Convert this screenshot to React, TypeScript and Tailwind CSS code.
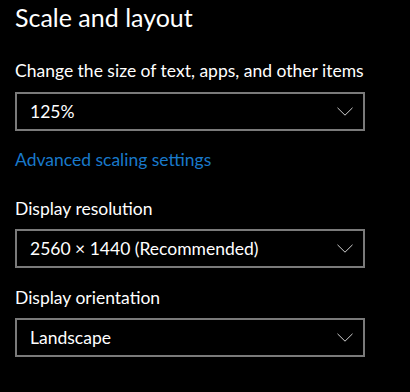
import React from 'react';

const Chevron = () => (
  <svg width="16" height="9" viewBox="0 0 16 9" fill="none" className="text-[#cfcfcf]">
    <path d="M0.5 0.8L8 8.2L15.5 0.8" stroke="currentColor" strokeWidth="1" />
  </svg>
);

const Select: React.FC<{ value: string }> = ({ value }) => (
  <div className="flex items-center justify-between w-[350px] h-[39px] border-2 border-[#7a7a7a] pl-[13px] pr-[10px]">
    <span className="text-[17.5px] leading-6 text-white">{value}</span>
    <Chevron />
  </div>
);

export default function App() {
  return (
    <div className="w-[410px] h-[392px] bg-black text-white pl-[15px] pt-[1px] font-['Lato',sans-serif]">
      <h1 className="text-[25px] leading-8 font-normal">Scale and layout</h1>

      <div className="mt-[26px] text-[17.5px] leading-6">Change the size of text, apps, and other items</div>
      <div className="mt-[9px]">
        <Select value="125%" />
      </div>

      <div className="mt-[17px] text-[17.5px] leading-6 text-[#1979ca]">Advanced scaling settings</div>

      <div className="mt-[25px] text-[17.5px] leading-6">Display resolution</div>
      <div className="mt-[8px]">
        <Select value="2560 × 1440 (Recommended)" />
      </div>

      <div className="mt-[18px] text-[17.5px] leading-6">Display orientation</div>
      <div className="mt-[8px]">
        <Select value="Landscape" />
      </div>
    </div>
  );
}
